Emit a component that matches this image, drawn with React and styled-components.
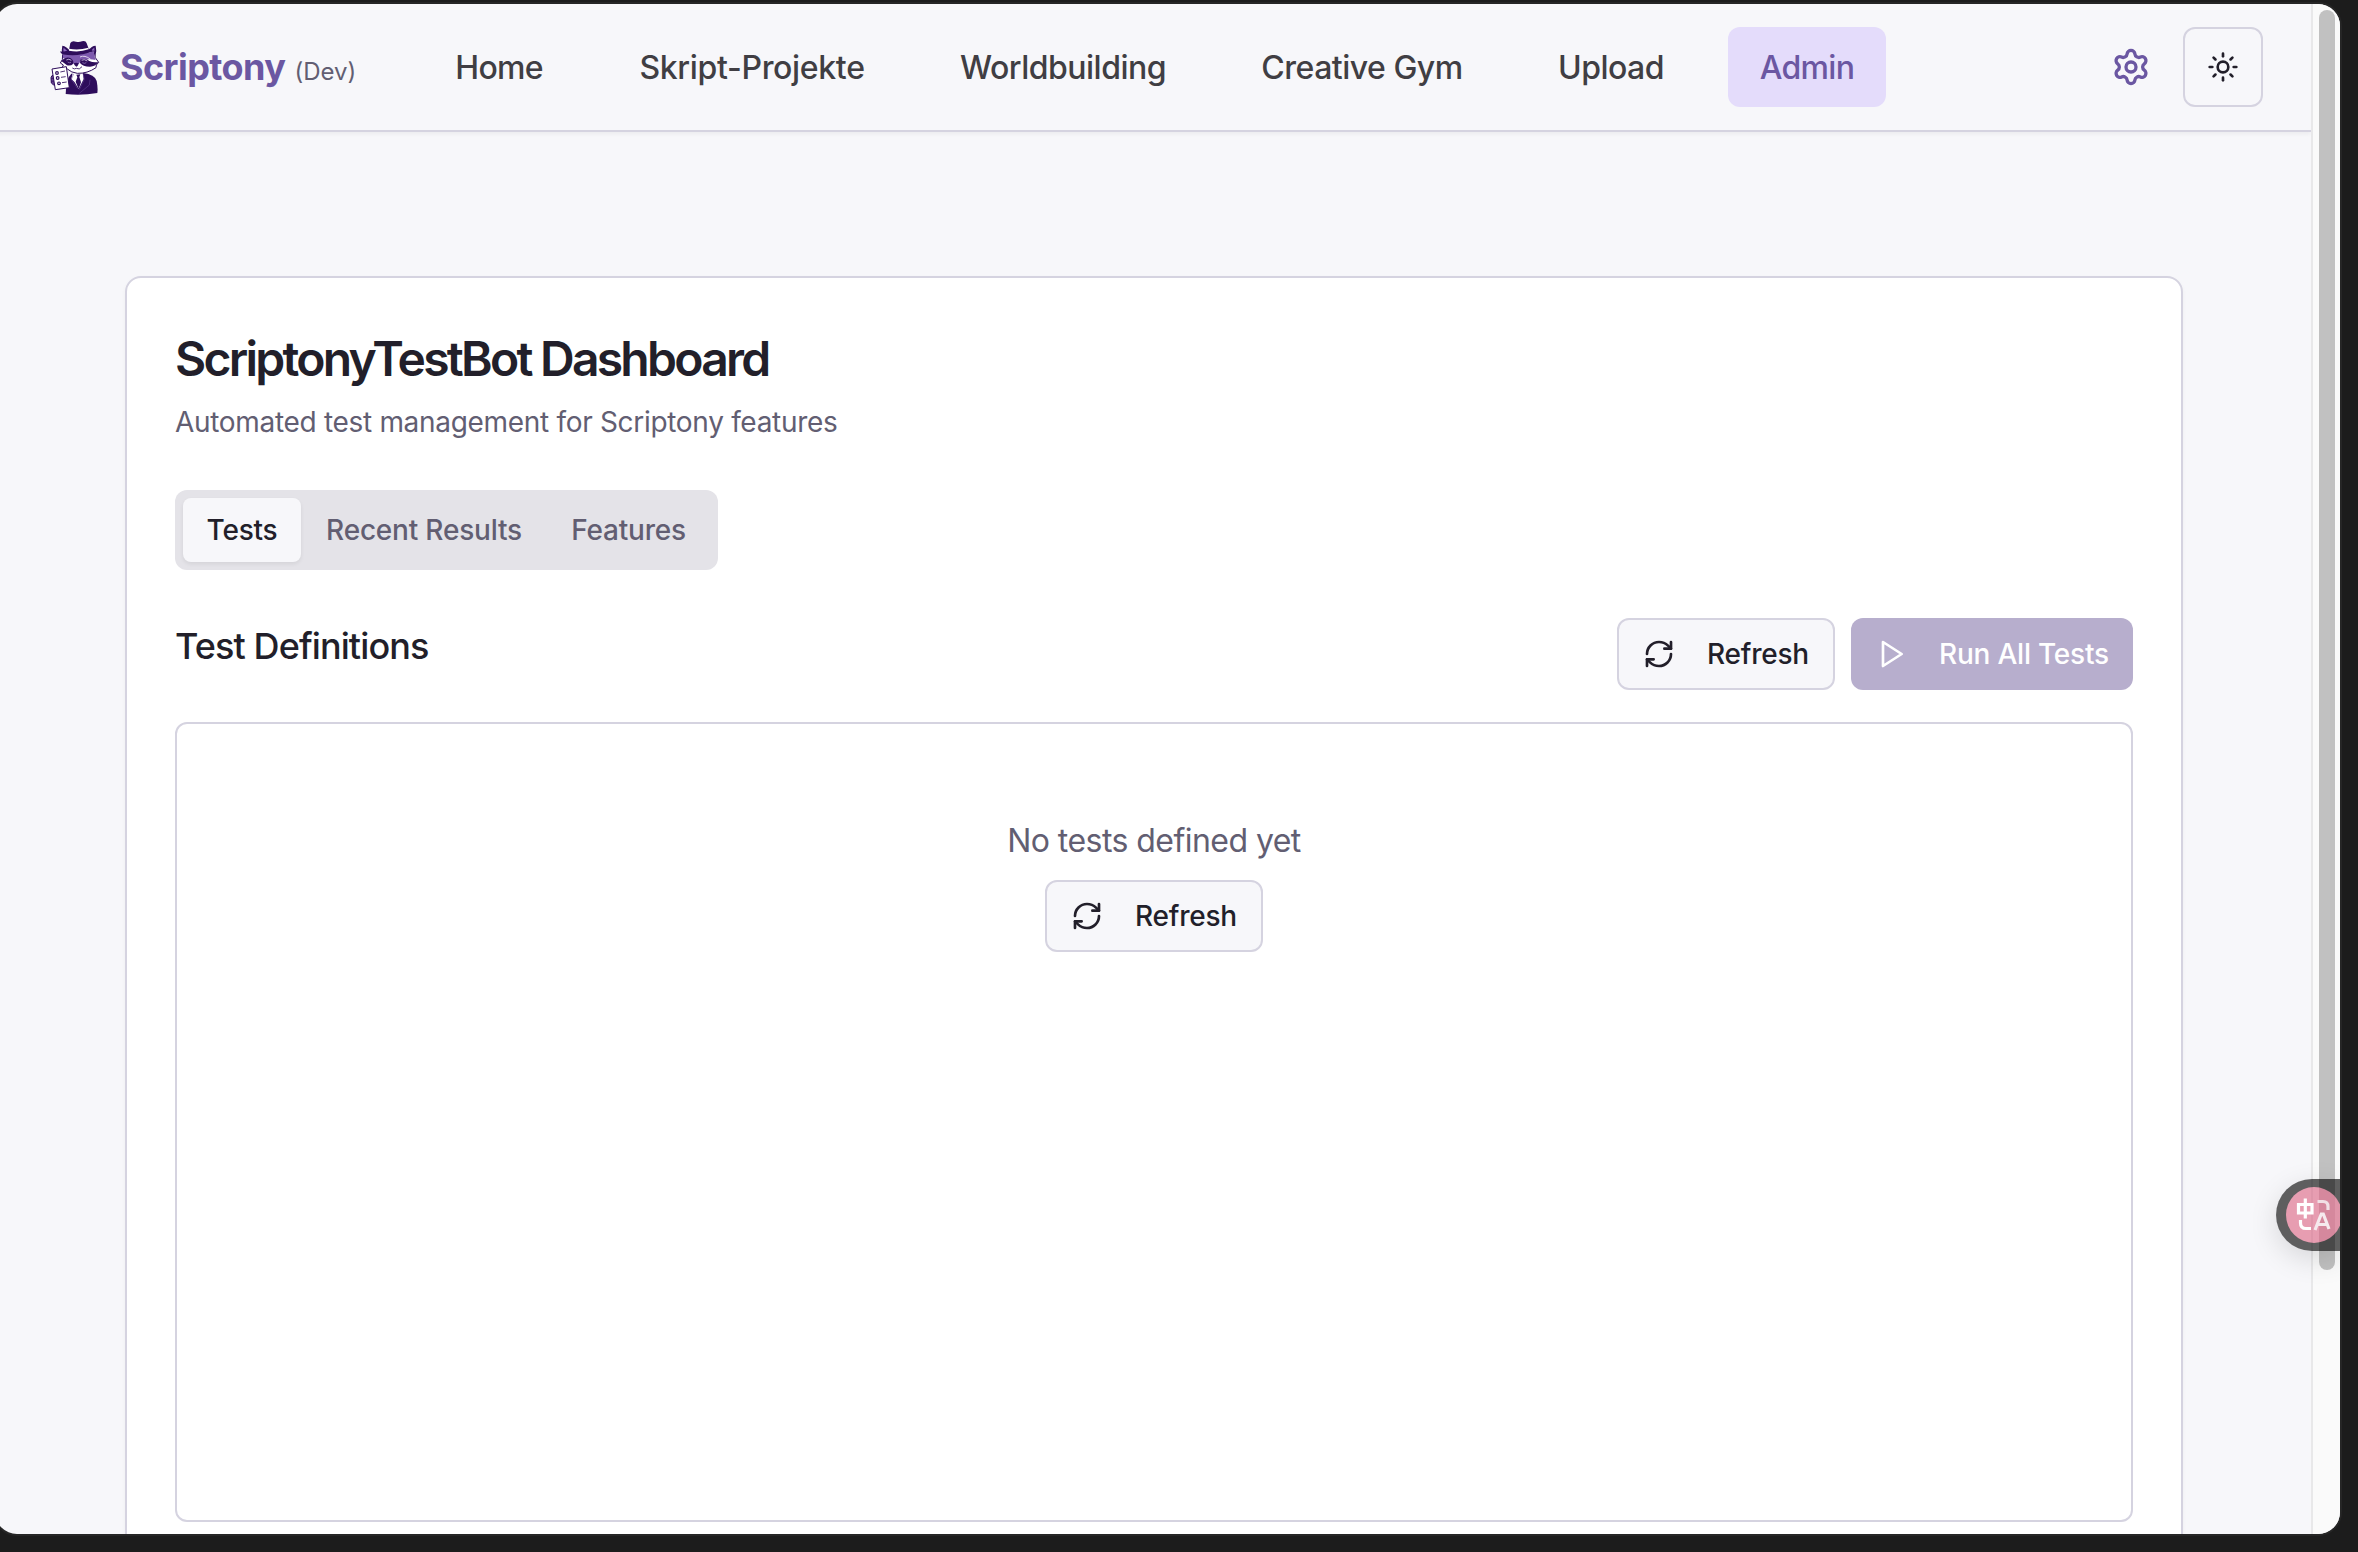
import React from "react";
import styled, { createGlobalStyle, css } from "styled-components";
import { Settings, Sun, RefreshCw } from "lucide-react";

const c = {
  desktop: "#1c1c1c",
  page: "#f7f7fa",
  border: "#d5d3e0",
  ink: "#221f2a",
  muted: "#625e72",
  nav: "#403e43",
  primary: "#6b57a2",
  accent: "#e4dcfb",
};

const Global = createGlobalStyle`
  * { box-sizing: border-box; }
  body {
    margin: 0;
    background: ${c.desktop};
    overflow: hidden;
    font-family: Inter, "Liberation Sans", sans-serif;
    color: ${c.ink};
  }
  button { font: inherit; color: inherit; margin: 0; }
  h1, h2, p { margin: 0; }
`;

const Desktop = styled.div`
  height: 1552px;
  padding-top: 4px;
  background: ${c.desktop};
  overflow: hidden;
`;

const Window = styled.div`
  position: relative;
  display: flex;
  width: 2345px;
  height: 1530px;
  margin-left: -5px;
  border-radius: 22px;
  overflow: hidden;
  background: ${c.page};
  box-shadow: 0 0 0 2px #262626;
`;

const Page = styled.div`
  flex: 1;
  display: flex;
  flex-direction: column;
`;

const Header = styled.header`
  display: flex;
  align-items: center;
  flex: none;
  height: 128px;
  padding: 0 48px 0 55px;
  border-bottom: 2px solid ${c.border};
  box-shadow: 0 2px 4px rgba(0, 0, 0, 0.05);
`;

const Brand = styled.div`
  display: flex;
  align-items: center;
  width: 372px;
`;

const BrandText = styled.div`
  display: flex;
  align-items: baseline;
  margin-left: 20px;
  white-space: nowrap;
`;

const BrandName = styled.span`
  font-size: 36px;
  line-height: 48px;
  font-weight: 700;
  letter-spacing: -0.57px;
  color: ${c.primary};
`;

const BrandTag = styled.span`
  margin-left: 9px;
  font-size: 24px;
  color: ${c.muted};
`;

const Nav = styled.nav`
  display: flex;
  gap: 32px;
`;

const NavItem = styled.a`
  display: flex;
  align-items: center;
  justify-content: center;
  width: ${(p) => p.$w}px;
  height: 80px;
  border-radius: 12px;
  font-size: 32px;
  font-weight: 500;
  letter-spacing: ${(p) => p.$ls || 0}px;
  white-space: nowrap;
  color: ${(p) => (p.$active ? c.primary : c.nav)};
  background: ${(p) => (p.$active ? c.accent : "transparent")};
`;

const Actions = styled.div`
  display: flex;
  align-items: center;
  gap: 32px;
  margin-left: auto;
  color: ${c.primary};
`;

const ThemeButton = styled.button`
  display: flex;
  align-items: center;
  justify-content: center;
  width: 80px;
  height: 80px;
  padding: 0;
  border: 2px solid ${c.border};
  border-radius: 12px;
  background: transparent;
  color: ${c.ink};
`;

const Card = styled.main`
  flex: none;
  width: 2058px;
  height: 1400px;
  margin: 144px 0 0 130px;
  padding: 48px;
  border: 2px solid ${c.border};
  border-radius: 16px;
  background: #fff;
  box-shadow: 0 2px 4px rgba(0, 0, 0, 0.04);
`;

const Title = styled.h1`
  font-size: 48px;
  line-height: 66px;
  font-weight: 600;
  letter-spacing: -2.75px;
  white-space: nowrap;
`;

const Subtitle = styled.p`
  margin-top: 10px;
  font-size: 28px;
  line-height: 40px;
  letter-spacing: -0.31px;
  color: ${c.muted};
  white-space: nowrap;
`;

const TabList = styled.div`
  display: inline-flex;
  height: 80px;
  margin-top: 48px;
  padding: 8px;
  border-radius: 12px;
  background: #e4e3e8;
  vertical-align: top;
`;

const Tab = styled.button`
  width: ${(p) => p.$w}px;
  padding: 0;
  border: 0;
  border-radius: 8px;
  font-size: 28px;
  font-weight: 500;
  white-space: nowrap;
  background: transparent;
  color: ${c.muted};
  letter-spacing: -0.2px;
  ${(p) =>
    p.$active &&
    css`
      background: ${c.page};
      color: ${c.ink};
      box-shadow: 0 2px 4px rgba(0, 0, 0, 0.07);
    `}
`;

const SectionHead = styled.div`
  display: flex;
  justify-content: space-between;
  margin-top: 48px;
  height: 72px;
`;

const SectionTitle = styled.h2`
  font-size: 36px;
  line-height: 56px;
  font-weight: 500;
  letter-spacing: -0.9px;
  white-space: nowrap;
`;

const ButtonRow = styled.div`
  display: flex;
  gap: 16px;
`;

const Button = styled.button`
  display: flex;
  align-items: center;
  gap: 32px;
  width: ${(p) => p.$w}px;
  height: 72px;
  padding: 0 24px;
  border: ${(p) => (p.$primary ? "0" : `2px solid ${c.border}`)};
  border-radius: 12px;
  background: ${(p) => (p.$primary ? "#b7aecd" : c.page)};
  color: ${(p) => (p.$primary ? "#fff" : c.ink)};
  font-size: 28px;
  font-weight: 500;
  white-space: nowrap;
  letter-spacing: -0.22px;
  svg { flex: none; }
`;

const Empty = styled.section`
  display: flex;
  flex-direction: column;
  align-items: center;
  gap: 15px;
  height: 800px;
  margin-top: 32px;
  padding-top: 93px;
  border: 2px solid ${c.border};
  border-radius: 12px;
`;

const EmptyText = styled.p`
  font-size: 32px;
  line-height: 48px;
  letter-spacing: -0.55px;
  color: ${c.muted};
`;

const ScrollTrack = styled.div`
  flex: none;
  width: 29px;
  padding: 6px 0 0 6px;
  border-left: 2px solid #e8e8e9;
  background: #fafafa;
`;

const ScrollThumb = styled.div`
  width: 16px;
  height: 1260px;
  border-radius: 8px;
  background: #c1c1c1;
`;

const Translate = styled.div`
  position: absolute;
  right: 0;
  top: 1175px;
  width: 64px;
  height: 72px;
  border-radius: 36px 0 0 36px;
  background: rgba(0, 0, 0, 0.62);
  box-shadow: 0 8px 28px rgba(0, 0, 0, 0.13);
`;

const TranslateDisc = styled.div`
  position: absolute;
  left: 2291px;
  top: 1183px;
  width: 56px;
  height: 56px;
  border-radius: 50%;
  background: linear-gradient(
    90deg,
    #e79db1 0 25px,
    #df96aa 25px 27px,
    #e79db1 27px 33px,
    #d5889d 33px 49px,
    #e095a9 49px
  );
  svg { display: block; }
`;

function Mascot() {
  const dark = "#2e0d5b";
  return (
    <svg width="50" height="55" viewBox="150 117 150 165">
      <path d="M197 279Q198 232 214 218L250 216Q284 220 290 240Q294 260 292 276Q245 284 197 279Z" fill={dark} />
      <path d="M218 217L214 234L224 244L236 264L251 234L248 214Z" fill="#fff" />
      <path d="M229 221L241 220L238 228L243 244L236 264L227 242L232 229Z" fill={dark} />
      <path d="M221 219L214 235L232 262M249 217L253 235L238 266M270 236L268 252L238 277" stroke="#6a4a9c" strokeWidth="1.5" fill="none" />
      <path d="M187 160Q184 144 187 134Q200 136 210 150ZM264 150Q275 134 287 134Q291 148 286 166Z" fill={dark} />
      <path d="M191 153Q189 144 191 140L202 150ZM270 153Q277 143 283 140Q285 151 280 162Z" fill="#8f6cc0" />
      <path d="M188 160Q236 164 282 150L286 170L296 184L289 192L288 200Q262 218 232 217Q214 215 202 204L187 199L190 192L181 186L187 176Z" fill="#fff" stroke={dark} strokeWidth="3" strokeLinejoin="round" />
      <path d="M189 160Q236 166 281 151L285 172L287 177Q268 172 243 178L236 190L222 190L214 176Q202 168 189 172Z" fill="#7d59ae" />
      <path d="M184 180Q197 166 211 171Q222 178 220 188Q212 196 201 193Q192 186 184 180ZM241 176Q258 170 268 180Q280 186 295 183Q286 197 270 197Q248 197 240 186Z" fill={dark} />
      <path d="M199 177Q206 172 214 178M245 178Q252 173 262 180" stroke="#d9cbec" strokeWidth="2.5" fill="none" />
      <path d="M203 183Q208 187 213 184M247 185Q253 189 259 185" stroke="#a78fcb" strokeWidth="2" fill="none" />
      <path d="M240 168Q254 161 272 175" stroke="#f0eaf8" strokeWidth="2.5" fill="none" />
      <path d="M221 187Q229 183 236 187Q234 196 229 197Q223 194 221 187Z" fill={dark} />
      <path d="M217 201Q223 206 229 202Q238 208 246 197" stroke={dark} strokeWidth="2.5" fill="none" />
      <path d="M181 151Q192 154 207 147L211 126Q216 118 228 122Q236 125 246 121Q257 118 260 127L266 143Q275 143 278 147Q270 156 248 160Q216 166 190 160Q181 158 181 151Z" fill={dark} />
      <path d="M207 143Q236 149 265 140L266 145Q238 155 207 149Z" fill="#fff" />
      <path d="M165 221Q153 222 153 230L154 246Q159 253 168 253Z" fill="#684493" stroke={dark} strokeWidth="3" />
      <path d="M154 233L166 231M154 241L166 240" stroke={dark} strokeWidth="2" />
      <path d="M156 204L199 197L208 260L166 266Z" fill="#fff" stroke={dark} strokeWidth="3" strokeLinejoin="round" />
      <g fill="none" stroke={dark} strokeWidth="3.5">
        <circle cx="171" cy="216" r="4" />
        <circle cx="173" cy="231" r="4" />
        <circle cx="177" cy="247" r="4" />
      </g>
      <path d="M181 213L195 210M183 229L197 227M186 245L200 243" stroke={dark} strokeWidth="2.5" />
    </svg>
  );
}

function PlayIcon() {
  return (
    <svg width="32" height="32" viewBox="0 0 24 24" fill="none" stroke="currentColor" strokeWidth="2" strokeLinecap="round" strokeLinejoin="round">
      <polygon points="6 3 20 12 6 21 6 3" />
    </svg>
  );
}

function TranslateIcon() {
  return (
    <svg width="56" height="56" viewBox="0 0 56 56" fill="none" stroke="#fff" strokeWidth="3.2">
      <path d="M12.5 17.5H26V26H12.5ZM19.3 11.5V31.5" />
      <path d="M31.5 14.500H37Q42 14.500 42 19.500V23" stroke="#f1e0e5" />
      <path d="M14.5 33V36Q14.500 41.500 20 41.500H25" />
      <path d="M29 43L35.3 27H37.3L43 42M31.500 37.500H41" stroke="#f6eaee" />
    </svg>
  );
}

const navItems = [
  { label: "Home", w: 154, ls: -0.75 },
  { label: "Skript-Projekte", w: 288, ls: -0.32 },
  { label: "Worldbuilding", w: 270, ls: -0.5 },
  { label: "Creative Gym", w: 264, ls: -0.5 },
  { label: "Upload", w: 170, ls: -0.5 },
  { label: "Admin", w: 158, ls: -0.7, active: true },
];

const tabs = [
  { label: "Tests", w: 118, active: true },
  { label: "Recent Results", w: 246 },
  { label: "Features", w: 163 },
];

function RefreshButton() {
  return (
    <Button $w={218}>
      <RefreshCw size={32} />
      Refresh
    </Button>
  );
}

export default function App() {
  return (
    <Desktop>
      <Global />
      <Window>
        <Page>
          <Header>
            <Brand>
              <Mascot />
              <BrandText>
                <BrandName>Scriptony</BrandName>
                <BrandTag>(Dev)</BrandTag>
              </BrandText>
            </Brand>
            <Nav>
              {navItems.map((n) => (
                <NavItem key={n.label} $w={n.w} $ls={n.ls} $active={n.active}>
                  {n.label}
                </NavItem>
              ))}
            </Nav>
            <Actions>
              <Settings size={40} />
              <ThemeButton>
                <Sun size={32} />
              </ThemeButton>
            </Actions>
          </Header>
          <Card>
            <Title>ScriptonyTestBot Dashboard</Title>
            <Subtitle>Automated test management for Scriptony features</Subtitle>
            <TabList>
              {tabs.map((t) => (
                <Tab key={t.label} $w={t.w} $active={t.active}>
                  {t.label}
                </Tab>
              ))}
            </TabList>
            <SectionHead>
              <SectionTitle>Test Definitions</SectionTitle>
              <ButtonRow>
                <RefreshButton />
                <Button $primary $w={282}>
                  <PlayIcon />
                  Run All Tests
                </Button>
              </ButtonRow>
            </SectionHead>
            <Empty>
              <EmptyText>No tests defined yet</EmptyText>
              <RefreshButton />
            </Empty>
          </Card>
        </Page>
        <ScrollTrack>
          <ScrollThumb />
        </ScrollTrack>
        <Translate />
        <TranslateDisc>
          <TranslateIcon />
        </TranslateDisc>
      </Window>
    </Desktop>
  );
}
